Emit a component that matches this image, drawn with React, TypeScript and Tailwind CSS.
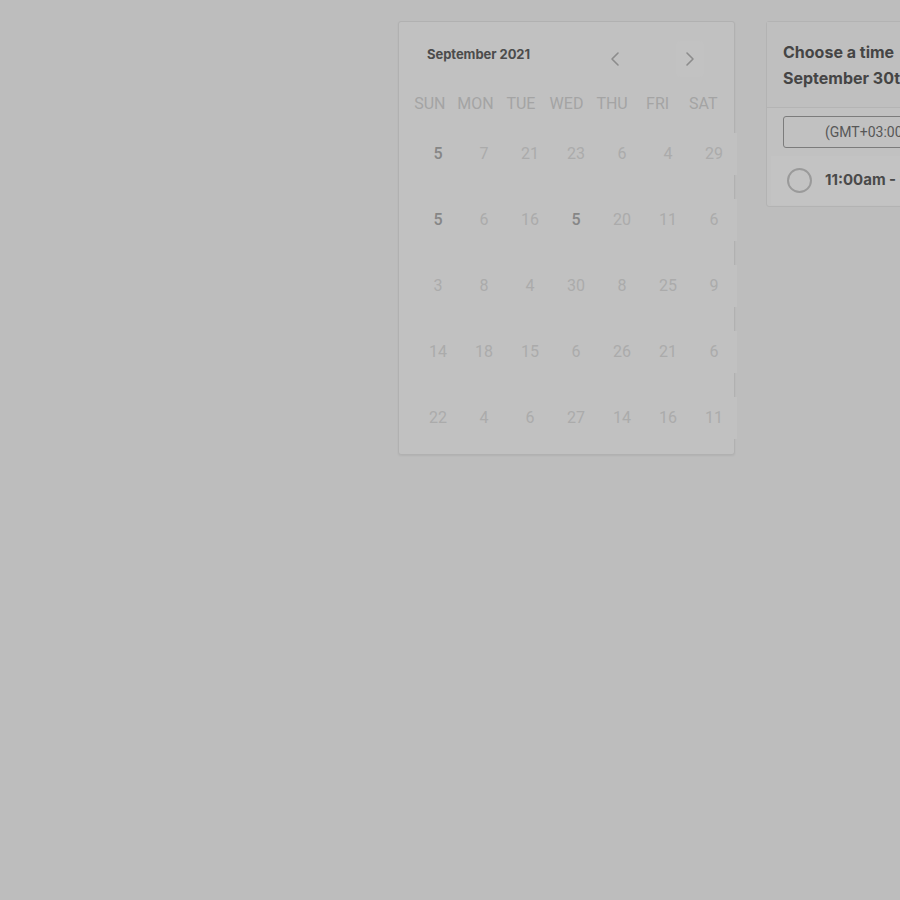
import React from "react";

const weekdays = ["SUN", "MON", "TUE", "WED", "THU", "FRI", "SAT"];

// days as shown in the picker, bold ones are the available dates
const weeks: { n: number; on?: boolean }[][] = [
  [{ n: 5, on: true }, { n: 7 }, { n: 21 }, { n: 23 }, { n: 6 }, { n: 4 }, { n: 29 }],
  [{ n: 5, on: true }, { n: 6 }, { n: 16 }, { n: 5, on: true }, { n: 20 }, { n: 11 }, { n: 6 }],
  [{ n: 3 }, { n: 8 }, { n: 4 }, { n: 30 }, { n: 8 }, { n: 25 }, { n: 9 }],
  [{ n: 14 }, { n: 18 }, { n: 15 }, { n: 6 }, { n: 26 }, { n: 21 }, { n: 6 }],
  [{ n: 22 }, { n: 4 }, { n: 6 }, { n: 27 }, { n: 14 }, { n: 16 }, { n: 11 }],
];

const Chevron = ({ dir }: { dir: "left" | "right" }) => (
  <svg width="10" height="16" viewBox="0 0 10 16" fill="none">
    <path
      d={dir === "left" ? "M8 2 L2 8 L8 14" : "M2 2 L8 8 L2 14"}
      stroke="#8c8c8c"
      strokeWidth="1.6"
      strokeLinecap="round"
      strokeLinejoin="round"
    />
  </svg>
);

const App = () => {
  return (
    <div className="w-[900px] h-[900px] overflow-hidden bg-[#bdbdbd]">
      <div className="flex items-start gap-[31px] pl-[398px] pt-[21px]">
        {/* calendar */}
        <div className="w-[337px] h-[434px] shrink-0 bg-[#c1c1c1] border border-[#b1b1b1] rounded-[3px] shadow-[0_1px_2px_rgba(0,0,0,0.06)]">
          <div className="flex items-center h-[60px] pl-[28px] pt-[14px] font-['Inter',sans-serif]">
            <span className="text-[13px] font-bold text-[#4c4c4c] tracking-[-0.05px] mb-[8px]">
              September 2021
            </span>
            <button className="ml-[71px] w-[28px] h-[28px] flex items-center justify-center">
              <Chevron dir="left" />
            </button>
            <button className="ml-[47px] w-[28px] h-[36px] flex items-center justify-center rounded bg-[#c2c2c2]">
              <Chevron dir="right" />
            </button>
          </div>
          <div className="grid grid-cols-7 w-[319px] ml-[8px] mt-[5px] h-[34px] items-center font-['Roboto',sans-serif] text-[16px] text-[#a4a4a4]">
            {weekdays.map((d) => (
              <div key={d} className="text-center">
                {d}
              </div>
            ))}
          </div>
          <div className="flex flex-col gap-[24px] ml-[16px] mt-[12px] font-['Roboto',sans-serif] text-[16px]">
            {weeks.map((w, i) => (
              <div key={i} className="grid grid-cols-7 w-[322px] h-[42px] bg-[#c1c1c1]">
                {w.map((d, j) => (
                  <div
                    key={j}
                    className={`flex items-center justify-center ${d.on ? "text-[#868686] font-medium" : "text-[#ababab]"}`}
                  >
                    {d.n}
                  </div>
                ))}
              </div>
            ))}
          </div>
        </div>

        {/* time picker */}
        <div className="w-[300px] shrink-0 bg-[#c1c1c1] border border-[#b3b3b3] rounded-[3px] font-['Inter',sans-serif]">
          <div className="h-[86px] bg-[#bfbfbf] border-b border-[#b4b4b4] px-[16px] pt-[17px] text-[16px] leading-[26px] font-bold text-[#454545] whitespace-nowrap">
            <div>Choose a time</div>
            <div>September 30th, 2021</div>
          </div>
          <div className="px-[16px] pt-[8px]">
            <div className="h-[32px] border border-[#7c7c7c] rounded-[3px] flex items-center pl-[41px] text-[14px] text-[#575757] font-['Roboto',sans-serif] whitespace-nowrap">
              (GMT+03:00) Istanbul
            </div>
          </div>
          <div className="mt-[8px] mb-[1px] ml-[4px] h-[49px] bg-[#c3c3c3] flex items-center pl-[16px] gap-[13px]">
            <div className="w-[25px] h-[25px] rounded-full border-2 border-[#9a9a9a]" />
            <span className="text-[15px] font-bold text-[#4a4a4a] whitespace-nowrap">
              11:00am - 11:30am
            </span>
          </div>
        </div>
      </div>
    </div>
  );
};

export default App;
